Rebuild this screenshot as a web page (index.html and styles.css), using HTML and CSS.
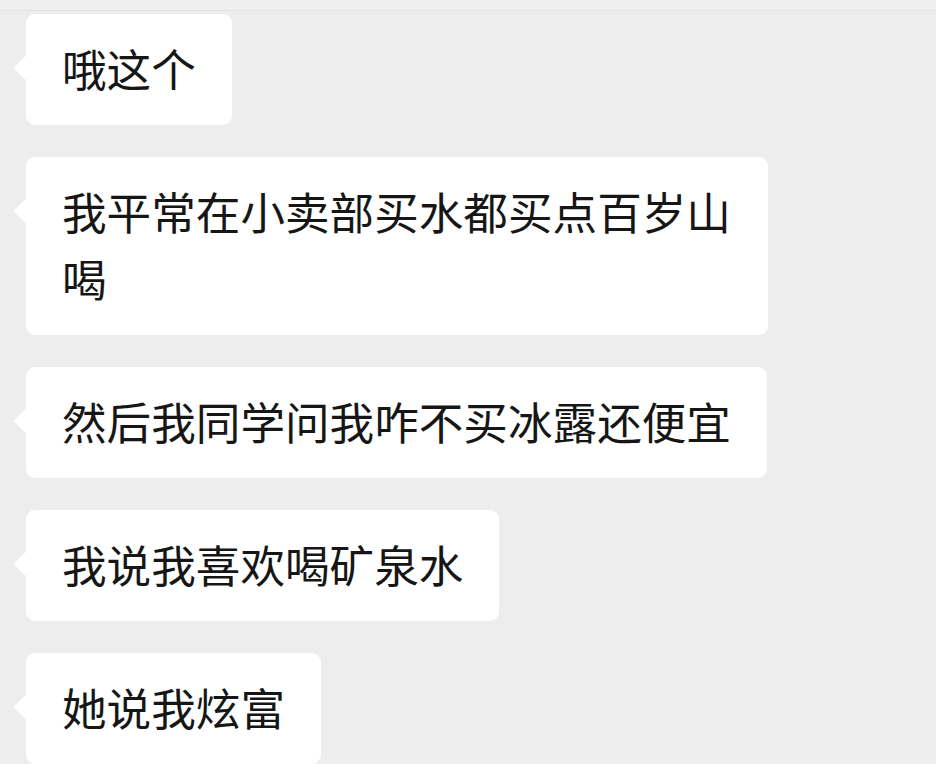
FILE: index.html
```html
<!DOCTYPE html>
<html lang="zh-CN">
<head>
<meta charset="utf-8">
<title>聊天</title>
<link rel="stylesheet" href="styles.css">
</head>
<body>
<div class="topbar"></div>
<main class="chat">
  <div class="msg"><div class="bubble">哦这个</div></div>
  <div class="msg"><div class="bubble">我平常在小卖部买水都买点百岁山喝</div></div>
  <div class="msg"><div class="bubble">然后我同学问我咋不买冰露还便宜</div></div>
  <div class="msg"><div class="bubble">我说我喜欢喝矿泉水</div></div>
  <div class="msg"><div class="bubble">她说我炫富</div></div>
</main>
</body>
</html>
```
FILE: styles.css
```css
html, body {
  margin: 0;
  padding: 0;
  background: #ededed;
  overflow: hidden;
}

body {
  width: 936px;
  height: 764px;
  font-family: "Noto Sans CJK SC", "Noto Sans", sans-serif;
}

.topbar {
  height: 10px;
  background: #efefef;
  border-bottom: 1px solid #e3e3e3;
}

.chat {
  display: flex;
  flex-direction: column;
  gap: 32px;
  padding: 3px 0 0 26px;
}

.msg {
  display: flex;
}

.bubble {
  position: relative;
  max-width: 670px;
  padding: 20px 36px 24px;
  background: #ffffff;
  border-radius: 9px;
  color: #161616;
  font-size: 44.6px;
  line-height: 67px;
  word-break: break-all;
}

/* small pointer on the left side of each bubble */
.bubble::before {
  content: "";
  position: absolute;
  left: -9px;
  top: 45px;
  width: 18px;
  height: 18px;
  background: #ffffff;
  border-radius: 3px;
  transform: rotate(45deg);
}
```
